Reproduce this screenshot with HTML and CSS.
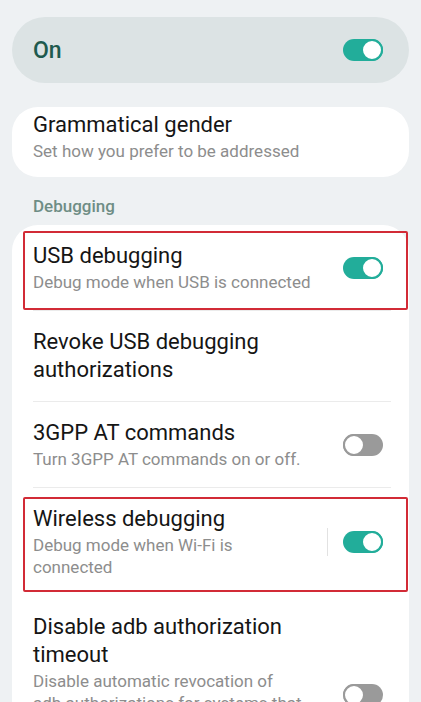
FILE: index.html
```html
<!DOCTYPE html>
<html lang="en">
<head>
<meta charset="utf-8">
<title>Developer options</title>
<link rel="stylesheet" href="styles.css">
</head>
<body>
<div class="page">
  <div class="master">
    <span class="master-label">On</span>
    <span class="toggle on"><span class="thumb"></span></span>
  </div>

  <div class="card single">
    <div class="text">
      <div class="title">Grammatical gender</div>
      <div class="sub">Set how you prefer to be addressed</div>
    </div>
  </div>

  <div class="section">Debugging</div>

  <div class="card list">
    <div class="row marked mark-a">
      <div class="text">
        <div class="title">USB debugging</div>
        <div class="sub">Debug mode when USB is connected</div>
      </div>
      <span class="toggle on"><span class="thumb"></span></span>
    </div>
    <div class="divider"></div>
    <div class="row">
      <div class="text">
        <div class="title">Revoke USB debugging<br>authorizations</div>
      </div>
    </div>
    <div class="divider"></div>
    <div class="row">
      <div class="text">
        <div class="title">3GPP AT commands</div>
        <div class="sub">Turn 3GPP AT commands on or off.</div>
      </div>
      <span class="toggle off"><span class="thumb"></span></span>
    </div>
    <div class="divider"></div>
    <div class="row marked mark-b">
      <div class="text">
        <div class="title">Wireless debugging</div>
        <div class="sub">Debug mode when Wi-Fi is<br>connected</div>
      </div>
      <span class="vsep"></span>
      <span class="toggle on"><span class="thumb"></span></span>
    </div>
    <div class="divider hidden"></div>
    <div class="row">
      <div class="text">
        <div class="title">Disable adb authorization<br>timeout</div>
        <div class="sub">Disable automatic revocation of<br>adb authorizations for systems that</div>
      </div>
      <span class="toggle off low"><span class="thumb"></span></span>
    </div>
  </div>
</div>
</body>
</html>
```

FILE: styles.css
```css
html, body {
  margin: 0;
  padding: 0;
  background: #eef1f3;
  height: 702px;
  overflow: hidden;
}

body {
  font-family: Roboto, "Noto Sans", sans-serif;
  color: #1b1b1b;
}

.page {
  padding: 17px 12px 0;
}

.master {
  height: 66px;
  border-radius: 33px;
  background: #dce3e4;
  display: flex;
  align-items: center;
  justify-content: space-between;
  padding: 0 26px 0 21px;
}

.master-label {
  font-size: 23px;
  font-weight: 500;
  color: #1e5a4e;
}

.card {
  background: #ffffff;
  border-radius: 26px;
}

.card.single {
  margin-top: 24px;
  padding: 4px 21px 15px;
}

.title {
  font-size: 22px;
  line-height: 28px;
  color: #151515;
}

.sub {
  margin-top: 1px;
  font-size: 17px;
  line-height: 22px;
  color: #8d8d8d;
}

.section {
  margin-top: 18px;
  padding-left: 21px;
  font-size: 17px;
  font-weight: 500;
  line-height: 22px;
  color: #6e8d85;
}

.card.list {
  margin-top: 8px;
  border-radius: 26px 26px 0 0;
  padding-bottom: 40px;
}

.row {
  position: relative;
  display: flex;
  align-items: center;
  padding: 17px 26px 17px 21px;
}

.row .text {
  flex: 1;
}

.divider {
  height: 1px;
  background: #ebebeb;
  margin: 0 18px 0 21px;
}

.divider.hidden {
  background: transparent;
}

.marked::after {
  content: "";
  position: absolute;
  left: 11px;
  right: 1px;
  border: 2px solid #d22b36;
  border-radius: 2px;
  pointer-events: none;
}

.mark-a::after {
  top: 6px;
  bottom: 0;
}

.mark-b::after {
  top: 9px;
  bottom: 3px;
}

.vsep {
  width: 1px;
  height: 28px;
  background: #e2e2e2;
  margin-right: 15px;
}

.toggle {
  position: relative;
  flex: none;
  width: 40px;
  height: 22px;
  border-radius: 11px;
  box-sizing: border-box;
}

.toggle .thumb {
  position: absolute;
  top: 0;
  width: 22px;
  height: 22px;
  border-radius: 50%;
  box-sizing: border-box;
  background: #ffffff;
}

.toggle.on {
  background: #22ad9a;
}

.toggle.on .thumb {
  right: 0;
  border: 2px solid #22ad9a;
}

.toggle.off {
  background: #9a9a9a;
}

.toggle.off .thumb {
  left: 0;
  border: 2px solid #9a9a9a;
}

.toggle.low {
  align-self: flex-end;
  margin-bottom: 8px;
}
```
